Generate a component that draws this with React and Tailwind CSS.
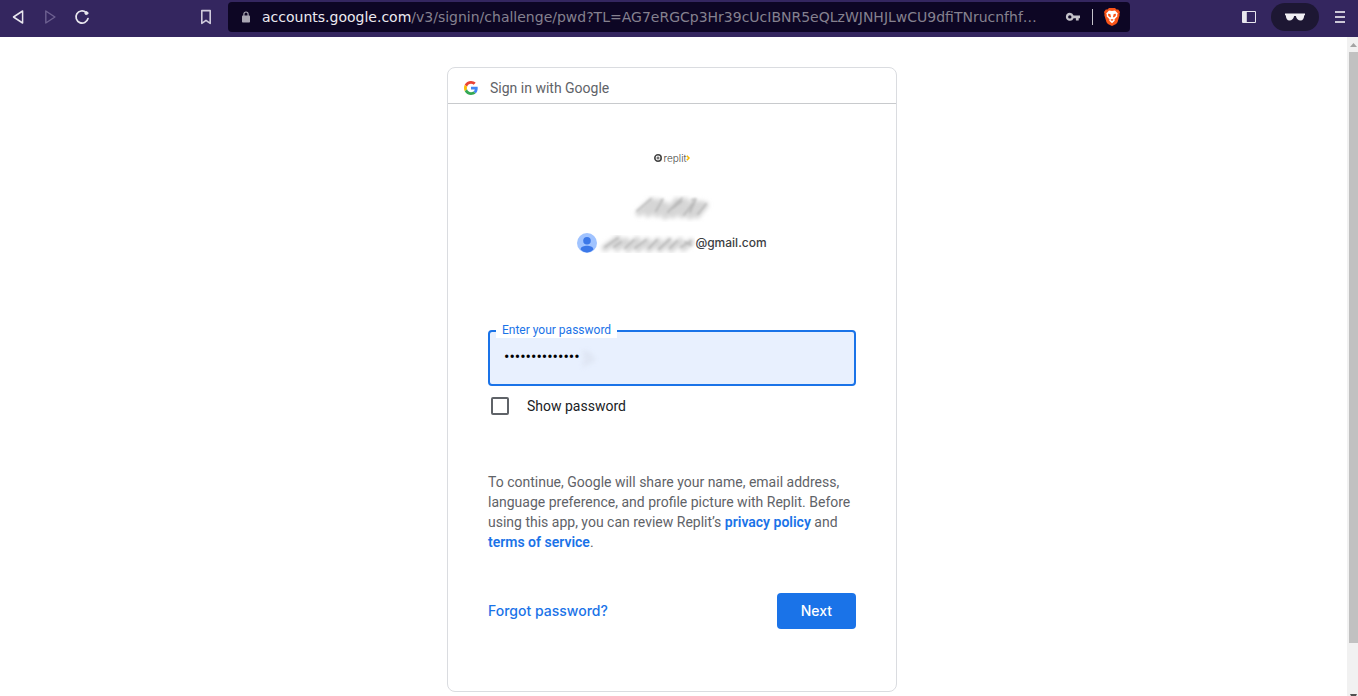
import { useId } from "react";

function Smudge({ className, viewBox, strokes, tint }) {
  const id = useId();
  return (
    <svg className={className} viewBox={viewBox} fill="none" aria-hidden="true">
      <filter id={`${id}a`} x="-20%" y="-40%" width="140%" height="180%">
        <feGaussianBlur stdDeviation="2" />
      </filter>
      <filter id={`${id}b`} x="-20%" y="-40%" width="140%" height="180%">
        <feGaussianBlur stdDeviation="1.3" />
      </filter>
      <g strokeLinecap="round">
        <path d={tint} stroke="#d6d6d6" strokeWidth="7" filter={`url(#${id}a)`} />
        <path d={strokes} stroke="#a8a8a8" strokeOpacity="0.6" strokeWidth="2" filter={`url(#${id}b)`} />
      </g>
    </svg>
  );
}

function Toolbar() {
  return (
    <header className="flex h-[37px] shrink-0 items-start bg-[#34265f] text-[#e8e6ee]">
      <nav className="flex h-[34px] w-[228px] shrink-0 items-center pl-2.5">
        <button aria-label="Back" className="mr-4 h-4 w-4">
          <svg viewBox="0 0 16 16" className="h-4 w-4" fill="none" stroke="currentColor" strokeWidth="1.5" strokeLinejoin="round">
            <path d="M12.600 2v12L3.500 8z" />
          </svg>
        </button>
        <button aria-label="Forward" className="mr-4 h-4 w-4 text-[#6d6191]">
          <svg viewBox="0 0 16 16" className="h-4 w-4" fill="none" stroke="currentColor" strokeWidth="1.4" strokeLinejoin="round">
            <path d="M3.800 2v12L12.900 8z" />
          </svg>
        </button>
        <button aria-label="Reload" className="h-4 w-4">
          <svg viewBox="0 0 16 16" className="h-4 w-4" fill="none" stroke="currentColor" strokeWidth="1.7" strokeLinecap="round">
            <path d="M14 9.5A6.1 6.1 0 1 1 12 3.3" />
            <circle cx="12.4" cy="4.1" r="1.5" fill="currentColor" strokeWidth="1" />
          </svg>
        </button>
        <button aria-label="Bookmark this page" className="mr-3.5 ml-auto h-4 w-4">
          <svg viewBox="0 0 16 16" className="h-4 w-4 text-[#d0cbdc]" fill="none" stroke="currentColor" strokeWidth="1.6" strokeLinejoin="round">
            <path d="M3.8 1.6h8.4v12.800L8 11.400l-4.200 3z" />
          </svg>
        </button>
      </nav>
      <div className="mt-0.5 flex h-[30px] max-w-[902px] min-w-0 flex-1 items-center rounded-sm bg-[#0d0624] pr-2.5 pl-3.5">
        <svg viewBox="0 0 8 12" className="mr-3 h-3 w-2 shrink-0" aria-hidden="true">
          <path d="M1.9 5V3.1a2.1 2.1 0 0 1 4.2 0V5" fill="none" stroke="#a9a6b3" strokeWidth="1.2" />
          <rect y="4.5" width="8" height="7" rx="0.8" fill="#a9a6b3" />
        </svg>
        <button className="min-w-0 flex-1 truncate text-left font-['DejaVu_Sans',sans-serif] text-sm text-[#85818f]">
          <span className="text-[#eceaf0]">accounts.google.com</span>
          /v3/signin/challenge/pwd?TL=AG7eRGCp3Hr39cUcIBNR5eQLzWJNHJLwCU9dfiTNrucnfhf…
        </button>
        <button aria-label="Manage passwords" className="ml-3 h-4 w-4 shrink-0">
          <svg viewBox="0 0 16 16" className="h-4 w-4" fill="#c4c2ca">
            <path fillRule="evenodd" d="M4.800 3.800a4 4 0 0 1 3.800 2.700H15v2.800h-1.300v2.300h-2.800V9.300H8.600A4 4 0 1 1 4.800 3.800zm0 2.400a1.700 1.700 0 1 0 0 3.400 1.700 1.700 0 0 0 0-3.400z" />
          </svg>
        </button>
        <span className="mx-[11px] h-4 w-px shrink-0 bg-[#c5c3cb]" />
        <button aria-label="Brave Shields" className="h-[18px] w-4 shrink-0">
          <svg viewBox="0 0 16 18" className="h-[18px] w-4">
            <path fill="#fb5418" d="M5 0h6l1.5 1.6 1.7-.2L16 4l-.6 1.9.3 1-2.2 7.4-1.4 1.6L8 18l-4.1-2.1-1.4-1.600L.3 6.900l.3-1L0 4l1.800-2.600 1.700.2z" />
            <path fill="#fff" d="M5 2.400 8 3l3-.6 2.800 3.200-.7 1.500.3 1.200-2.900 3 .2 1.400L8 15.200l-2.700-2.500.2-1.400-2.900-3 .3-1.200-.7-1.500z" />
            <path fill="#fb5418" d="m4 5.800 2.300.3.700 2.700-.7.800-2-1.700zM12 5.800l-2.300.3L9 8.800l.7.800 2-1.700zM6.300 11.800 8 11l1.700.8L8 12.900z" />
          </svg>
        </button>
      </div>
      <div className="ml-auto flex h-[34px] shrink-0 items-center pr-[13px] pl-4">
        <button aria-label="Show sidebar" className="mr-3.5 h-4 w-4">
          <svg viewBox="0 0 16 16" className="h-4 w-4">
            <path fill="currentColor" fillRule="evenodd" d="M2 2h12a1 1 0 0 1 1 1v10a1 1 0 0 1-1 1H2a1 1 0 0 1-1-1V3a1 1 0 0 1 1-1zm3.800 1v10h8.200V3z" />
          </svg>
        </button>
        <button aria-label="Private window" className="mr-4 flex h-7 w-12 items-center justify-center rounded-full bg-[#1d1733]">
          <svg viewBox="0 0 20 8" className="h-2 w-5">
            <path fill="#f0eff3" d="M0 .4h20v1.600l-.8.4C18.900 6 17.700 7.400 15.700 7.400c-2.700 0-4.200-1.700-4.800-4.500H9.100C8.500 5.700 7 7.400 4.300 7.400 2.300 7.400 1.100 6 .8 2.400L0 2z" />
          </svg>
        </button>
        <button aria-label="Main menu" className="flex w-2.5 flex-col gap-[3px]">
          <span className="h-0.5 w-full bg-[#cbc7d6]" />
          <span className="h-0.5 w-full bg-[#cbc7d6]" />
          <span className="h-0.5 w-full bg-[#cbc7d6]" />
        </button>
      </div>
    </header>
  );
}

function GoogleMark() {
  return (
    <svg viewBox="0 0 48 48" className="h-3.5 w-3.5" aria-hidden="true">
      <path fill="#EA4335" d="M24 9.500c3.540 0 6.710 1.220 9.210 3.600l6.850-6.850C35.900 2.380 30.470 0 24 0 14.620 0 6.510 5.380 2.560 13.220l7.980 6.190C12.430 13.720 17.740 9.500 24 9.500z" />
      <path fill="#4285F4" d="M46.980 24.550c0-1.570-.15-3.090-.38-4.550H24v9.020h12.940c-.58 2.960-2.260 5.480-4.780 7.180l7.730 6c4.510-4.180 7.090-10.360 7.090-17.650z" />
      <path fill="#FBBC05" d="M10.530 28.590c-.48-1.450-.76-2.990-.76-4.590s.27-3.140.76-4.590l-7.980-6.190C.92 16.460 0 20.120 0 24c0 3.880.92 7.540 2.560 10.780l7.970-6.190z" />
      <path fill="#34A853" d="M24 48c6.480 0 11.930-2.130 15.890-5.810l-7.730-6c-2.150 1.450-4.920 2.300-8.160 2.300-6.260 0-11.570-4.220-13.470-9.910l-7.980 6.190C6.510 42.620 14.620 48 24 48z" />
    </svg>
  );
}

function SignInCard() {
  return (
    <section className="w-full max-w-[450px] rounded-lg border border-[#dadce0] text-sm text-[#5f6368]">
      <div className="flex h-9 items-center gap-3 border-b border-[#c8cacd] px-4 pt-1">
        <GoogleMark />
        <span>Sign in with Google</span>
      </div>
      <div className="flex flex-col px-10 pt-12 pb-[62px]">
        <div className="flex h-3 items-center justify-center text-[#444]">
          <svg viewBox="0 0 8 8" className="mr-0.5 h-2 w-2" fill="none" stroke="currentColor" aria-hidden="true">
            <circle cx="4" cy="4" r="3.200" strokeWidth="1.600" />
            <circle cx="4" cy="4" r="1" strokeWidth="1" />
          </svg>
          <span className="font-[Inter,sans-serif] text-[10px] leading-3 font-light">replit</span>
          <svg viewBox="0 0 4 6" className="h-1.5 w-1" fill="none" stroke="#f5b800" strokeWidth="1.500" aria-hidden="true">
            <path d="m.8.800 2.200 2.200-2.200 2.200" />
          </svg>
        </div>
        <Smudge
          className="mt-6 mr-1 h-10 w-[90px] self-center"
          viewBox="0 0 90 40"
          tint="M14 25 27 13M23 26l11-12M32 26l8-9M40 28l12-15M48 27l12-14M57 27l11-12M65 28l10-12M72 27l8-10"
          strokes="M12 23 26 11M31 23l7-12M43 24l14-14M48 20l9-7M59 27l10-13M65 24l6-13M73 26l8-10M67 12l3-1M36 12l1 1"
        />
        <div className="flex h-[30px] items-center justify-center">
          <svg viewBox="0 0 20 20" className="h-5 w-5" aria-hidden="true">
            <circle cx="10" cy="10" r="10" fill="#a0c3ff" />
            <circle cx="10" cy="7.700" r="3.800" fill="#3c78e8" />
            <path fill="#3c78e8" d="M3.700 16.800v-.9c0-2.100 3.700-3.200 6.300-3.200s6.300 1.100 6.300 3.200v.9A9.300 9.300 0 0 1 10 19.400a9.300 9.300 0 0 1-6.300-2.600z" />
          </svg>
          <Smudge
            className="h-[30px] w-[98px]"
            viewBox="0 0 98 30"
            tint="M8 20l13-9M20 20l9-7M31 21l9-9M41 21l9-8M52 21l9-8M63 21l9-8M74 21l9-8M86 20l8-6"
            strokes="M8 19 21 10M17 19l7-5M28 20l9-8M38 20l11-8M52 20l8-8M62 21l11-10M73 20l7-7M84 19l10-6M88 14l6 3"
          />
          <span className="font-[Inter,sans-serif] text-xs leading-5 font-medium text-[#3c4043]">@gmail.com</span>
        </div>
        <div className="relative mt-[72px]">
          <input
            id="password"
            type="password"
            defaultValue="hunter22hunter"
            className="block h-14 w-full rounded border-2 border-[#1a73e8] bg-[#e8f0fe] px-3.5 pb-1 text-base text-black outline-none"
          />
          <svg viewBox="0 0 24 24" className="pointer-events-none absolute top-4 left-[88px] h-6 w-6 blur-[2px]" fill="#dfe6f4" aria-hidden="true">
            <path d="M6 4l8 2 6 8-6 4-8 3 2-8z" />
          </svg>
          <label htmlFor="password" className="absolute -top-2 left-2 bg-white px-1.5 text-xs leading-4 text-[#1a73e8]">
            Enter your password
          </label>
        </div>
        <label className="mt-2.5 flex items-center gap-[18px] pl-[3px] leading-5 text-[#202124]">
          <input type="checkbox" className="h-[18px] w-[18px] appearance-none rounded-xs border-2 border-[#5f6368] bg-white checked:bg-[#1a73e8]" />
          Show password
        </label>
        <p className="mt-14 leading-5">
          To continue, Google will share your name, email address, language preference, and profile picture with Replit. Before using this app, you can review Replit’s{" "}
          <a href="#privacy" className="font-semibold text-[#1a73e8]">privacy policy</a> and{" "}
          <a href="#terms" className="font-semibold text-[#1a73e8]">terms of service</a>.
        </p>
        <div className="mt-[41px] flex h-9 items-center justify-between font-[Inter,sans-serif] font-medium">
          <a href="#forgot" className="text-[#1a73e8]">Forgot password?</a>
          <button className="h-9 rounded bg-[#1a73e8] px-6 text-white">Next</button>
        </div>
      </div>
    </section>
  );
}

function ScrollTrack() {
  return (
    <div className="flex w-[11px] shrink-0 flex-col bg-[#f1f1f1] pl-0.5" aria-hidden="true">
      <svg viewBox="0 0 9 15" className="h-[15px] w-full shrink-0" fill="#a3a3a3">
        <path d="M1 10h7L4.500 6z" />
      </svg>
      <div className="flex-1 bg-[#c1c1c1]" />
      <svg viewBox="0 0 9 53" className="h-[53px] w-full shrink-0" fill="#505050">
        <path d="M1 51h7l-1 2H2z" />
      </svg>
    </div>
  );
}

export default function App() {
  return (
    <div className="flex min-h-screen flex-col bg-white font-[Roboto,sans-serif]">
      <Toolbar />
      <div className="flex flex-1">
        <main className="flex flex-1 items-start justify-center pt-[30px] pr-[3px] pb-1">
          <SignInCard />
        </main>
        <ScrollTrack />
      </div>
    </div>
  );
}
